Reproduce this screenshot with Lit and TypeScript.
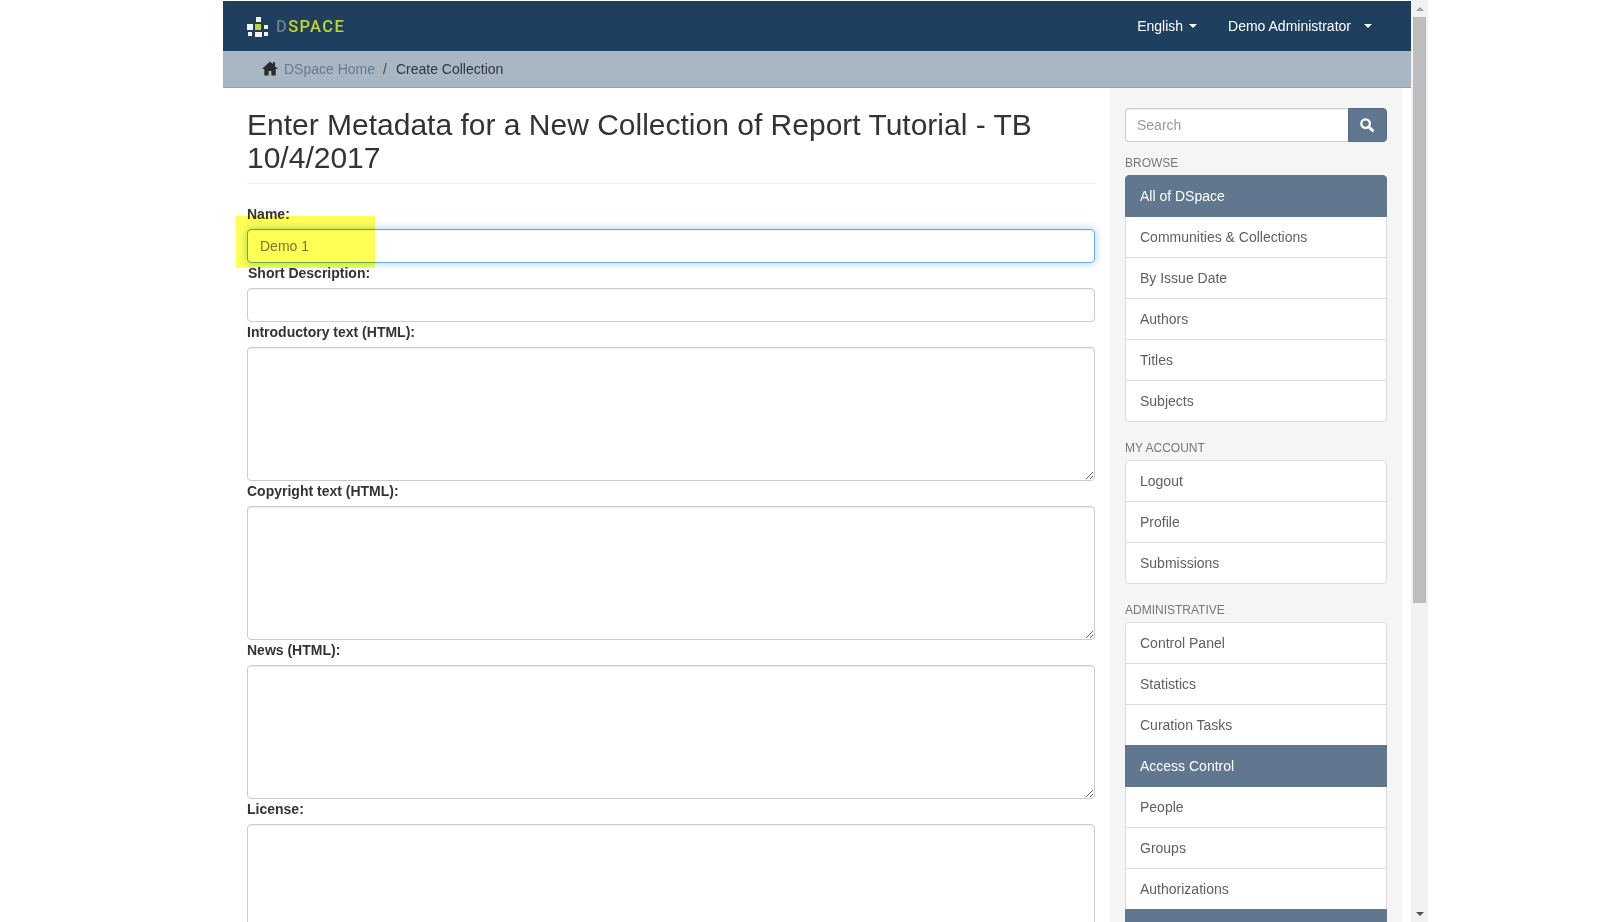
import { LitElement, html, svg, css } from 'lit';
import { customElement } from 'lit/decorators.js';

interface NavItem {
  label: string;
  active?: boolean;
}

const NAV: { heading: string; items: NavItem[] }[] = [
  {
    heading: 'BROWSE',
    items: [
      { label: 'All of DSpace', active: true },
      { label: 'Communities & Collections' },
      { label: 'By Issue Date' },
      { label: 'Authors' },
      { label: 'Titles' },
      { label: 'Subjects' }
    ]
  },
  {
    heading: 'MY ACCOUNT',
    items: [{ label: 'Logout' }, { label: 'Profile' }, { label: 'Submissions' }]
  },
  {
    heading: 'ADMINISTRATIVE',
    items: [
      { label: 'Control Panel' },
      { label: 'Statistics' },
      { label: 'Curation Tasks' },
      { label: 'Access Control', active: true },
      { label: 'People' },
      { label: 'Groups' },
      { label: 'Authorizations' },
      // next header is cut by the window, only its bar shows
      { label: '', active: true }
    ]
  }
];

// x, y, size, fill of the logo squares
const LOGO: [number, number, number, string][] = [
  [9, 2, 5, '#f4f4f4'],
  [0, 9, 6, '#f4f4f4'],
  [8, 9, 6, '#c3d52d'],
  [17, 10, 4, '#f4f4f4'],
  [1, 17, 4, '#f4f4f4'],
  [8, 17, 7, '#f4f4f4'],
  [17, 17, 4, '#f4f4f4']
];

@customElement('app-root')
export class AppRoot extends LitElement {
  static styles = css`
    :host {
      display: block;
      height: 922px;
      overflow: hidden;
      background: #fff;
      font-family: 'Liberation Sans', Arial, sans-serif;
      font-size: 14px;
      line-height: 20px;
      color: #333;
    }
    * {
      box-sizing: border-box;
    }
    .frame {
      display: flex;
      height: 922px;
      padding-left: 223px;
      position: relative;
    }
    .page {
      width: 1188px;
      padding-top: 1px;
      display: flex;
      flex-direction: column;
      overflow: hidden;
    }

    .topbar {
      flex: none;
      height: 50px;
      background: #1f3f5f;
      color: #fff;
      display: flex;
      align-items: center;
      padding: 0 39px 0 24px;
    }
    .brand {
      display: flex;
      align-items: center;
      gap: 8px;
      margin-right: auto;
    }
    .wordmark {
      padding-top: 2px;
      font-family: Roboto, sans-serif;
      font-weight: 500;
      font-size: 16.5px;
      letter-spacing: 1.35px;
      color: #c3d52d;
      line-height: 20px;
    }
    .wordmark span {
      color: #6f7b86;
    }
    .menu {
      display: flex;
      align-items: center;
      margin-left: 31px;
    }
    .caret {
      width: 0;
      height: 0;
      border-top: 4px solid #fff;
      border-left: 4px solid transparent;
      border-right: 4px solid transparent;
    }
    .lang .caret {
      margin-left: 6px;
    }
    .user .caret {
      margin-left: 13px;
    }

    .crumbs {
      flex: none;
      height: 37px;
      background: #a9b7c5;
      border-bottom: 1px solid #8fa0b1;
      display: flex;
      align-items: center;
      padding-left: 39px;
    }
    .crumbs svg {
      margin: -2px 6px 0 0;
    }
    .crumbs a {
      color: #647a91;
    }
    .crumbs .sep {
      margin: 0 9px 0 8px;
      color: #3d4a57;
    }
    .crumbs .here {
      color: #2d3640;
    }

    .body {
      flex: 1;
      display: flex;
      min-height: 0;
    }
    .main {
      width: 887px;
      padding: 20px 15px 0 24px;
    }
    h2 {
      margin: 0 0 20px;
      padding-bottom: 9px;
      border-bottom: 1px solid #eee;
      font-size: 30px;
      font-weight: 400;
      line-height: 33px;
      color: #333;
    }
    label {
      display: block;
      height: 25px;
      font-weight: 700;
      line-height: 20px;
      color: #333;
    }
    label.nudged {
      padding-left: 1px;
    }
    input,
    textarea {
      display: block;
      width: 100%;
      border: 1px solid #ccc;
      border-radius: 4px;
      background: #fff;
      font: inherit;
      color: #555;
      padding: 6px 12px;
      outline: none;
      box-shadow: inset 0 1px 1px rgba(0, 0, 0, 0.075);
    }
    .field {
      height: 34px;
    }
    .field.focused {
      color: #777;
      border-color: #66afe9;
      box-shadow:
        inset 0 1px 1px rgba(0, 0, 0, 0.075),
        0 0 8px rgba(102, 175, 233, 0.6);
    }
    textarea {
      height: 134px;
      resize: vertical;
    }

    .side {
      width: 292px;
      background: #f5f5f5;
      padding: 20px 15px 0;
    }
    .search {
      display: flex;
      height: 34px;
    }
    .search input {
      flex: 1;
      min-width: 0;
      height: 34px;
      padding-left: 11px;
      border-right: 0;
      border-radius: 4px 0 0 4px;
    }
    .search input::placeholder {
      color: #999;
    }
    .search button {
      width: 39px;
      border: 1px solid #566c83;
      border-radius: 0 4px 4px 0;
      background: #60778f;
      display: flex;
      align-items: center;
      justify-content: center;
      padding: 0 1px 1px 0;
    }
    .nav-heading {
      margin: 18px 0 3px;
      font-size: 12px;
      line-height: 17px;
      color: #777;
    }
    .nav-heading.first {
      margin-top: 13px;
    }
    .item {
      height: 42px;
      margin-bottom: -1px;
      padding: 10px 15px 10px 14px;
      background: #fff;
      border: 1px solid #ddd;
      color: #5f5f5f;
    }
    .item:first-child {
      border-radius: 4px 4px 0 0;
    }
    .item:last-child {
      margin-bottom: 0;
      border-radius: 0 0 4px 4px;
    }
    .item.active {
      position: relative;
      background: #60778f;
      border-color: #60778f;
      color: #fff;
    }

    .scrollbar {
      width: 17px;
      height: 922px;
      background: #f1f1f1;
      display: flex;
      flex-direction: column;
      align-items: center;
    }
    .arrow {
      flex: none;
      height: 17px;
      width: 100%;
      display: flex;
      align-items: center;
      justify-content: center;
    }
    .arrow i {
      width: 0;
      height: 0;
      border-left: 4px solid transparent;
      border-right: 4px solid transparent;
    }
    .arrow.up i {
      border-bottom: 4px solid #a3a3a3;
    }
    .arrow.down i {
      border-top: 4px solid #505050;
    }
    .thumb {
      flex: none;
      width: 13px;
      height: 586px;
      background: #bdbdbd;
    }
    .spacer {
      flex: 1;
    }

    .marker {
      position: absolute;
      left: 236px;
      top: 216px;
      width: 139px;
      height: 52px;
      background: #ffff55;
      mix-blend-mode: multiply;
      pointer-events: none;
    }
  `;

  render() {
    return html`
      <div class="frame">
        <div class="page">
          <header class="topbar">
            <div class="brand">
              <svg width="21" height="22" viewBox="0 0 21 22">
                ${LOGO.map(([x, y, s, fill]) => svg`<rect x=${x} y=${y} width=${s} height=${s} fill=${fill} />`)}
              </svg>
              <div class="wordmark"><span>D</span>SPACE</div>
            </div>
            <div class="menu lang">English<i class="caret"></i></div>
            <div class="menu user">Demo Administrator<i class="caret"></i></div>
          </header>

          <nav class="crumbs">
            <svg width="16" height="15" viewBox="0 0 16 15">
              <path fill="#2b2b2b" d="M8 .5 0 8h2.3v6.6h4.3V10h2.8v4.6h4.3V8H16l-3-2.8V1.3h-2.2v1.9z" />
            </svg>
            <a>DSpace Home</a>
            <span class="sep">/</span>
            <span class="here">Create Collection</span>
          </nav>

          <div class="body">
            <main class="main">
              <h2>Enter Metadata for a New Collection of Report Tutorial - TB 10/4/2017</h2>
              <label>Name:</label>
              <input class="field focused" .value=${'Demo 1'} />
              <label class="nudged">Short Description:</label>
              <input class="field" />
              <label>Introductory text (HTML):</label>
              <textarea></textarea>
              <label>Copyright text (HTML):</label>
              <textarea></textarea>
              <label>News (HTML):</label>
              <textarea></textarea>
              <label>License:</label>
              <textarea></textarea>
            </main>

            <aside class="side">
              <div class="search">
                <input placeholder="Search" />
                <button aria-label="Search">
                  <svg width="14" height="14" viewBox="0 0 14 14">
                    <circle cx="5.6" cy="5.6" r="4.3" fill="none" stroke="#fff" stroke-width="2.3" />
                    <path d="M8.9 8.9 12.6 12.6" stroke="#fff" stroke-width="2.8" stroke-linecap="round" />
                  </svg>
                </button>
              </div>
              ${NAV.map(
                (group, i) => html`
                  <div class="nav-heading ${i === 0 ? 'first' : ''}">${group.heading}</div>
                  <div class="list">
                    ${group.items.map(
                      (item) => html`<div class="item ${item.active ? 'active' : ''}">${item.label}</div>`
                    )}
                  </div>
                `
              )}
            </aside>
          </div>
        </div>

        <div class="scrollbar">
          <div class="arrow up"><i></i></div>
          <div class="thumb"></div>
          <div class="spacer"></div>
          <div class="arrow down"><i></i></div>
        </div>

        <div class="marker"></div>
      </div>
    `;
  }
}
